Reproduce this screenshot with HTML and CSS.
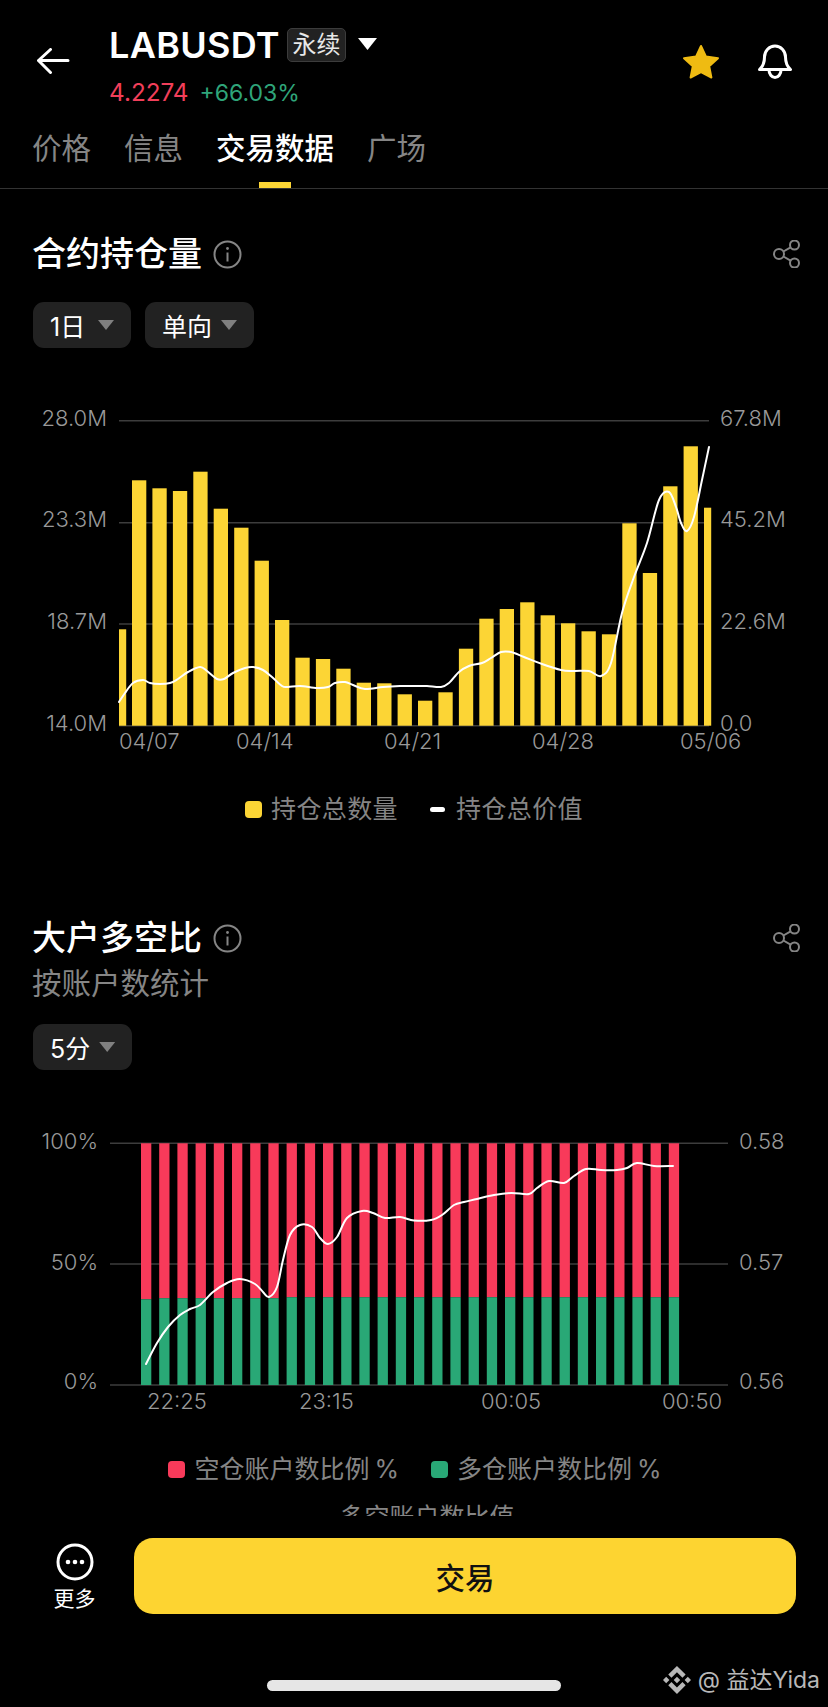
FILE: index.html
```html
<!DOCTYPE html>
<html lang="zh-CN">
<head>
    <meta charset="UTF-8">
    <meta name="viewport" content="width=device-width, initial-scale=1.0">
    <title>LABUSDT 交易数据</title>
    <link rel="stylesheet" href="styles.css">
</head>
<body>
    <header class="topbar">
        <svg class="back" width="34" height="26" viewBox="0 0 34 26">
            <path d="M32 12.5H2.5M14.5 1.5 2.5 12.5 14.5 24.5" fill="none" stroke="#fff" stroke-width="3" stroke-linecap="round" stroke-linejoin="round"/>
        </svg>
        <div class="symbol">
            <div class="symbol-row">
                <span class="symbol-name">LABUSDT</span>
                <span class="badge">永续</span>
                <span class="symbol-caret"></span>
            </div>
            <div class="price-row">
                <span class="price">4.2274</span>
                <span class="change">+66.03%</span>
            </div>
        </div>
        <div class="top-actions">
            <svg width="38" height="35" viewBox="0 0 38 35">
                <path d="M19 2 24 12.6 36 14.2 27.2 22.2 29.4 33.5 19 28 8.6 33.5 10.8 22.2 2 14.2 14 12.6Z" fill="#efbb12" stroke="#efbb12" stroke-width="2" stroke-linejoin="round"/>
            </svg>
            <svg width="36" height="36" viewBox="0 0 36 36">
                <path d="M2.5 25.5Q7.5 21 7.5 13A10.5 11 0 0 1 28.5 13Q28.5 21 33.5 25.5Z" fill="none" stroke="#fff" stroke-width="3" stroke-linejoin="round"/>
                <path d="M12 26A6 7.5 0 0 0 24 26" fill="none" stroke="#fff" stroke-width="3"/>
            </svg>
        </div>
    </header>

    <nav class="tabs">
        <span class="tab">价格</span>
        <span class="tab">信息</span>
        <span class="tab active">交易数据</span>
        <span class="tab">广场</span>
    </nav>

    <main class="content">
        <section class="section first">
            <div class="section-head">
                <h2 class="section-title">合约持仓量</h2>
                <svg class="info" width="29" height="29" viewBox="0 0 29 29">
                    <circle cx="14.5" cy="14.5" r="13" fill="none" stroke="#858585" stroke-width="2"/>
                    <path d="M14.5 12.5V21.5" stroke="#858585" stroke-width="2"/>
                    <circle cx="14.5" cy="8.5" r="1.4" fill="#858585"/>
                </svg>
                <svg class="share" width="28" height="28" viewBox="0 0 28 28">
                    <g fill="none" stroke="#858585" stroke-width="2">
                        <circle cx="21.5" cy="5" r="4.5"/>
                        <circle cx="6" cy="14" r="5"/>
                        <circle cx="21.5" cy="23" r="4.5"/>
                        <path d="M17.6 7.3 10.4 11.5M10.4 16.5 17.6 20.7"/>
                    </g>
                </svg>
            </div>
            <div class="pills">
                <span class="pill">1日<i class="caret"></i></span>
                <span class="pill">单向<i class="caret"></i></span>
            </div>
            <svg class="chart chart-oi" id="oi-chart" width="828" height="360" viewBox="0 0 828 360">
                <text class="axis end" x="107" y="26">28.0M</text>
                <text class="axis end" x="107" y="127">23.3M</text>
                <text class="axis end" x="107" y="229">18.7M</text>
                <text class="axis end" x="107" y="331">14.0M</text>
                <text class="axis" x="720" y="26">67.8M</text>
                <text class="axis" x="720" y="127">45.2M</text>
                <text class="axis" x="720" y="229">22.6M</text>
                <text class="axis" x="720" y="331">0.0</text>
                <text class="axis" x="119" y="349">04/07</text>
                <text class="axis" x="236" y="349">04/14</text>
                <text class="axis" x="384" y="349">04/21</text>
                <text class="axis" x="532" y="349">04/28</text>
                <text class="axis" x="680" y="349">05/06</text>
            </svg>
            <div class="legend legend-oi">
                <span class="legend-item"><i class="swatch yellow"></i>持仓总数量</span>
                <span class="legend-item"><i class="dash"></i>持仓总价值</span>
            </div>
        </section>

        <section class="section second">
            <div class="section-head">
                <h2 class="section-title">大户多空比</h2>
                <svg class="info" width="29" height="29" viewBox="0 0 29 29">
                    <circle cx="14.5" cy="14.5" r="13" fill="none" stroke="#858585" stroke-width="2"/>
                    <path d="M14.5 12.5V21.5" stroke="#858585" stroke-width="2"/>
                    <circle cx="14.5" cy="8.5" r="1.4" fill="#858585"/>
                </svg>
                <svg class="share" width="28" height="28" viewBox="0 0 28 28">
                    <g fill="none" stroke="#858585" stroke-width="2">
                        <circle cx="21.5" cy="5" r="4.5"/>
                        <circle cx="6" cy="14" r="5"/>
                        <circle cx="21.5" cy="23" r="4.5"/>
                        <path d="M17.6 7.3 10.4 11.5M10.4 16.5 17.6 20.7"/>
                    </g>
                </svg>
            </div>
            <p class="section-sub">按账户数统计</p>
            <div class="pills pills-sub">
                <span class="pill">5分<i class="caret"></i></span>
            </div>
            <svg class="chart chart-ratio" id="ratio-chart" width="828" height="320" viewBox="0 0 828 320">
                <text class="axis end" x="98" y="49">100%</text>
                <text class="axis end" x="98" y="170">50%</text>
                <text class="axis end" x="98" y="289">0%</text>
                <text class="axis" x="739" y="49">0.58</text>
                <text class="axis" x="739" y="170">0.57</text>
                <text class="axis" x="739" y="289">0.56</text>
                <text class="axis" x="147" y="309">22:25</text>
                <text class="axis" x="299" y="309">23:15</text>
                <text class="axis" x="481" y="309">00:05</text>
                <text class="axis" x="662" y="309">00:50</text>
            </svg>
            <div class="legend legend-ratio">
                <span class="legend-item"><i class="swatch red"></i>空仓账户数比例 %</span>
                <span class="legend-item"><i class="swatch green"></i>多仓账户数比例 %</span>
            </div>
            <div class="legend legend-next">
                <span class="legend-item">多空账户数比值</span>
            </div>
        </section>
    </main>

    <footer class="bottom">
        <div class="bottom-row">
            <div class="more">
                <svg width="38" height="38" viewBox="0 0 38 38">
                    <circle cx="19" cy="19" r="17" fill="none" stroke="#fff" stroke-width="3"/>
                    <circle cx="12" cy="19" r="2.3" fill="#fff"/>
                    <circle cx="19" cy="19" r="2.3" fill="#fff"/>
                    <circle cx="26" cy="19" r="2.3" fill="#fff"/>
                </svg>
                <span class="more-label">更多</span>
            </div>
            <button class="trade">交易</button>
        </div>
        <div class="home-bar"></div>
    </footer>

    <div class="watermark">
        <svg width="28" height="28" viewBox="0 0 126.4 126.4">
            <path fill="#b8b8b8" d="M38.2 53.2 63 28.4l24.8 24.8 14.4-14.4L63 0 23.7 38.8ZM0 63l14.4-14.4L28.9 63 14.4 77.4ZM38.2 72.7 63 97.5l24.8-24.8 14.4 14.4L63 126.4 23.7 87.2ZM97.5 63l14.4-14.4L126.4 63l-14.5 14.4ZM77.6 63 63 48.3 48.3 63 63 77.6Z"/>
        </svg>
        <span>@ 益达Yida</span>
    </div>

    <script src="charts.js"></script>
</body>
</html>
```

FILE: styles.css
```css
* {
    box-sizing: border-box;
    margin: 0;
    padding: 0;
}
html, body {
    height: 100%;
}
body {
    display: flex;
    flex-direction: column;
    height: 1707px;
    overflow: hidden;
    position: relative;
    background-color: #000;
    color: #fff;
    font-family: "Inter", "Noto Sans CJK SC", sans-serif;
}

/* top bar */
.topbar {
    display: flex;
    flex: none;
    height: 112px;
    padding: 28px 35px 0 36px;
}
.back {
    margin-top: 20px;
}
.symbol {
    margin-left: 39px;
}
.symbol-row {
    display: flex;
    align-items: center;
    height: 34px;
}
.symbol-name {
    width: 178px;
    font-size: 36px;
    font-weight: 600;
    letter-spacing: 0.3px;
}
.badge {
    width: 59px;
    height: 34px;
    line-height: 31px;
    text-align: center;
    font-size: 24px;
    color: #e8e8e8;
    background-color: #222;
    border: 1px solid #3c3c3c;
    border-radius: 5px;
}
.symbol-caret {
    width: 19px;
    height: 12px;
    margin: -2px 0 0 12px;
    background-color: #fff;
    clip-path: polygon(0 0, 100% 0, 50% 100%);
}
.price-row {
    display: flex;
    align-items: baseline;
    gap: 11px;
    margin-top: 15px;
    line-height: 30px;
    font-size: 24.3px;
}
.price {
    color: #f23f5a;
}
.change {
    font-size: 23px;
    color: #2fa57a;
}
.top-actions {
    display: flex;
    gap: 37px;
    margin: 16px 0 0 auto;
}

/* tabs */
.tabs {
    display: flex;
    flex: none;
    gap: 33px;
    height: 77px;
    padding: 16px 0 0 32px;
    border-bottom: 1px solid #333;
}
.tab {
    position: relative;
    height: 60px;
    line-height: 40px;
    font-size: 29.5px;
    color: #858585;
}
.tab.active {
    font-weight: 500;
    color: #fff;
}
.tab.active::after {
    content: "";
    position: absolute;
    left: 50%;
    bottom: 0;
    width: 32px;
    height: 6px;
    margin-left: -16px;
    background-color: #fcd535;
}

/* sections */
.content {
    flex: 1;
    min-height: 0;
    overflow: hidden;
}
.section.first {
    padding-top: 45px;
}
.section.second {
    padding-top: 94px;
}
.section-head {
    display: flex;
    align-items: center;
    height: 40px;
    padding: 0 27px 0 32px;
}
.section-title {
    font-size: 34px;
    font-weight: 500;
    line-height: 40px;
}
.info {
    margin-left: 11px;
}
.share {
    margin-left: auto;
}
.section-sub {
    margin-top: 5px;
    padding-left: 32px;
    line-height: 40px;
    font-size: 29.5px;
    color: #858585;
}
.pills {
    display: flex;
    gap: 14px;
    margin-top: 28px;
    padding-left: 33px;
}
.pills-sub {
    margin-top: 21px;
}
.pill {
    display: flex;
    align-items: center;
    justify-content: space-between;
    gap: 9px;
    min-width: 98px;
    height: 46px;
    padding: 0 17px;
    font-size: 25px;
    background-color: #222;
    border-radius: 11px;
}
.caret {
    width: 16px;
    height: 10px;
    background-color: #808080;
    clip-path: polygon(0 0, 100% 0, 50% 100%);
}

/* charts */
.chart {
    display: block;
}
.chart-oi {
    margin-top: 52px;
}
.chart-ratio {
    margin-top: 30px;
}
.axis {
    font-size: 22px;
    font-weight: 300;
    fill: #999;
}
.axis.end {
    text-anchor: end;
}
.legend {
    display: flex;
    justify-content: center;
    gap: 32px;
    height: 30px;
    margin-top: 34px;
}
.legend-oi .legend-item {
    letter-spacing: 0.4px;
}
.legend-ratio {
    padding-left: 2px;
}
.legend-ratio .legend-item {
    word-spacing: -2px;
}
.legend-next {
    margin-top: 18px;
    padding-left: 26px;
}
.legend-item {
    display: flex;
    align-items: center;
    gap: 9px;
    line-height: 30px;
    font-size: 25px;
    color: #858585;
}
.swatch {
    width: 17px;
    height: 17px;
    border-radius: 4px;
}
.swatch.yellow {
    background-color: #fcd535;
}
.swatch.red {
    background-color: #f83a5a;
}
.swatch.green {
    background-color: #29a876;
}
.dash {
    width: 15px;
    height: 5px;
    margin-right: 2px;
    background-color: #fff;
    border-radius: 3px;
}

/* bottom bar */
.bottom {
    flex: none;
    height: 191px;
    padding-top: 22px;
    background-color: #000;
}
.bottom-row {
    display: flex;
    gap: 17px;
    padding: 0 32px;
}
.more {
    display: flex;
    flex-direction: column;
    align-items: center;
    width: 85px;
    padding-top: 5px;
}
.more-label {
    margin-top: 5px;
    line-height: 26px;
    font-size: 21px;
    color: #fff;
}
.trade {
    flex: 1;
    height: 76px;
    font-family: inherit;
    font-size: 29.5px;
    font-weight: 500;
    color: #111;
    background-color: #fdd431;
    border: none;
    border-radius: 19px;
}
.home-bar {
    width: 294px;
    height: 11px;
    margin: 66px auto 0;
    background-color: #e6e6e6;
    border-radius: 6px;
}
.watermark {
    position: absolute;
    right: 8px;
    bottom: 12px;
    display: flex;
    align-items: center;
    gap: 7px;
    line-height: 30px;
    font-size: 23px;
    color: #b8b8b8;
}
```

FILE: charts.js
```js
const NS = "http://www.w3.org/2000/svg";

function add(svg, tag, attrs) {
    const el = document.createElementNS(NS, tag);
    for (const key in attrs) el.setAttribute(key, attrs[key]);
    // keep the labels on top
    svg.insertBefore(el, svg.querySelector("text"));
    return el;
}

function gridLines(svg, x1, x2, rows) {
    rows.forEach(y => add(svg, "line", { x1, x2, y1: y, y2: y, stroke: "#3d3d3d", "stroke-width": 1.5 }));
}

// catmull-rom through the points, so the line stays round
function smoothLine(svg, pts) {
    let d = `M${pts[0][0]} ${pts[0][1]}`;
    for (let i = 0; i < pts.length - 1; i++) {
        const p0 = pts[i - 1] || pts[i];
        const p1 = pts[i];
        const p2 = pts[i + 1];
        const p3 = pts[i + 2] || p2;
        const c1x = p1[0] + (p2[0] - p0[0]) / 6;
        const c1y = p1[1] + (p2[1] - p0[1]) / 6;
        const c2x = p2[0] - (p3[0] - p1[0]) / 6;
        const c2y = p2[1] - (p3[1] - p1[1]) / 6;
        d += `C${c1x.toFixed(1)} ${c1y.toFixed(1)} ${c2x.toFixed(1)} ${c2y.toFixed(1)} ${p2[0]} ${p2[1]}`;
    }
    add(svg, "path", { d, fill: "none", stroke: "#fff", "stroke-width": 2, "stroke-linecap": "round" });
}

// open interest
const oi = document.getElementById("oi-chart");
const oiTops = [229.3, 80.3, 88.3, 91, 71.7, 108.7, 127.7, 160.7, 220, 257.7, 259, 268.7, 282.7, 283.3, 294.3,
    300.7, 292.3, 248.7, 218.7, 209, 202.3, 215.3, 223.3, 231.3, 234.3, 123.3, 173, 86.3, 46.3, 107.7];
const oiLine = [[119,302],[125,293],[133,283],[143,280],[150,283],[160,284],[170,283],[178,279],[188,272],[200,267],
    [207,271],[217,279],[224,279],[233,273],[245,268],[253,267],[263,270],[272,277],[282,286],[288,287],[300,286],
    [317,288],[328,287],[335,283],[345,282],[353,285],[365,289],[383,287],[400,286],[414,286],[427,286],[441,287],
    [449,283],[459,272],[469,266],[482,263],[491,258],[501,252],[511,252],[524,257],[542,264],[561,270],[574,271],
    [589,271],[601,276],[611,263],[622,213],[634,177],[647,143],[659,100],[669,92],[676,107],[681,123],[687,131],
    [694,117],[702,80],[709,47]];

gridLines(oi, 119, 709, [20.7, 122.7, 224, 325.7]);
oiTops.forEach((top, i) => {
    // first and last bars are cut in half by the plot edge
    let x = 132 + (i - 1) * 20.43;
    let w = 14.3;
    if (i === 0) { x = 119; w = 7.2; }
    if (i === oiTops.length - 1) w = 7.2;
    add(oi, "rect", { x: x.toFixed(1), y: top, width: w, height: 325.7 - top, fill: "#fcd535" });
});
smoothLine(oi, oiLine);

// long/short ratio
const ratio = document.getElementById("ratio-chart");
const ratioLine = [[146,264],[157,243],[168,227],[180,215],[190,209],[200,205],[213,192],[227,183],[240,179],[255,184],
    [263,192],[269,197],[277,187],[283,160],[290,135],[300,125],[312,127],[320,138],[328,144],[337,137],[347,118],
    [362,111],[373,113],[385,118],[400,117],[414,120.5],[431,120],[442,115],[454,105],[464,102],[477,99],[494,95],
    [511,93],[529,94],[537,88],[549,81],[564,83],[574,76],[586,69],[601,70],[617,70],[627,68],[637,63],[654,66],[673,66]];

gridLines(ratio, 110, 728, [43.3, 164, 285]);
for (let i = 0; i < 30; i++) {
    const x = (141 + i * 18.2).toFixed(1);
    const split = i === 0 ? 199.3 : i < 8 ? 198.2 : 197.2;
    add(ratio, "rect", { x, y: 43.3, width: 10.3, height: split - 43.3, fill: "#f83a5a" });
    add(ratio, "rect", { x, y: split, width: 10.3, height: 285 - split, fill: "#29a876" });
}
smoothLine(ratio, ratioLine);
```
